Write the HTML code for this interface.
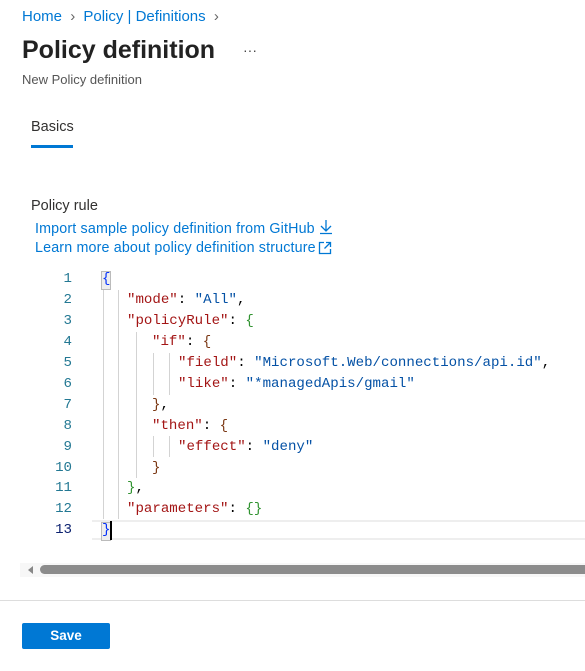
<!DOCTYPE html>
<html><head><style>
body{margin:0;width:585px;height:671px;background:#fff;font-family:"Liberation Sans",sans-serif;position:relative;overflow:hidden}
.a{position:absolute;white-space:nowrap}
.lk{color:#0078d4}
.code{font-family:"Liberation Mono",monospace;font-size:14.1px}
.n{position:absolute;left:40px;width:32px;text-align:right;color:#237893}
.k{color:#a31515}.s{color:#0451a5}
.b1{color:#0431fa}.b2{color:#319331}.b3{color:#7b3814}
.g{position:absolute;width:1px;background:#d3d3d3}
</style></head><body>
<div class="a lk" style="left:22px;top:8px;font-size:15px">Home <span style="color:#666;margin:0 4px">&#8250;</span> Policy | Definitions <span style="color:#666;margin-left:4px">&#8250;</span></div>
<div class="a" style="left:22px;top:36px;font-size:25px;font-weight:bold;color:#222">Policy definition</div>
<div class="a" style="left:243px;top:42px;font-size:14px;color:#444">···</div>
<div class="a" style="left:22px;top:72px;font-size:13px;color:#555">New Policy definition</div>
<div class="a" style="left:31px;top:119px;font-size:14.5px;color:#323130">Basics</div>
<div class="a" style="left:31px;top:145px;width:42px;height:3px;background:#0078d4"></div>
<div class="a" style="left:31px;top:198px;font-size:14.5px;color:#323130">Policy rule</div>
<div class="a lk" style="left:35px;top:221px;font-size:14.3px;letter-spacing:0.15px">Import sample policy definition from GitHub</div>
<svg class="a" style="left:319px;top:219px" width="14" height="16"><path d="M7 1v11M2 7l5 5 5-5M1 14.5h12" stroke="#0078d4" fill="none" stroke-width="1.3"/></svg>
<div class="a lk" style="left:35px;top:240px;font-size:14.3px;letter-spacing:0.15px">Learn more about policy definition structure</div>
<svg class="a" style="left:318px;top:241px" width="14" height="14"><path d="M6 1.5H1.5v11h11V8M8 1.5h4.5V6M12.5 1.5L6.5 7.5" stroke="#0078d4" fill="none" stroke-width="1.3"/></svg>

<div class="a" style="left:92px;top:520px;width:493px;height:20px;border-top:2px solid #eee;border-bottom:2px solid #eee;box-sizing:border-box"></div>
<div class="g" style="left:103px;top:290px;height:229px"></div>
<div class="g" style="left:118px;top:290px;height:229px"></div>
<div class="g" style="left:136px;top:332px;height:146px"></div>
<div class="g" style="left:153px;top:353px;height:42px"></div>
<div class="g" style="left:169px;top:353px;height:42px"></div>
<div class="g" style="left:153px;top:436px;height:21px"></div>
<div class="g" style="left:169px;top:436px;height:21px"></div>
<div class="a" style="left:101px;top:271px;width:8px;height:17px;background:#eee;border:1px solid #bbb"></div>
<div class="a" style="left:101px;top:522px;width:8px;height:17px;background:#eee;border:1px solid #bbb"></div>
<div class="a" style="left:110px;top:521px;width:2px;height:19px;background:#000"></div>
<div class="code">
<div class="n" style="top:271px">1</div><div class="n" style="top:292px">2</div><div class="n" style="top:313px">3</div><div class="n" style="top:334px">4</div><div class="n" style="top:355px">5</div><div class="n" style="top:376px">6</div><div class="n" style="top:397px">7</div><div class="n" style="top:418px">8</div><div class="n" style="top:439px">9</div><div class="n" style="top:460px">10</div><div class="n" style="top:480px">11</div><div class="n" style="top:501px">12</div><div class="n" style="top:522px;color:#0b216f">13</div>
<div class="a b1" style="left:102px;top:271px">{</div>
<div class="a" style="left:127px;top:292px"><span class="k">"mode"</span>: <span class="s">"All"</span>,</div>
<div class="a" style="left:127px;top:313px"><span class="k">"policyRule"</span>: <span class="b2">{</span></div>
<div class="a" style="left:152px;top:334px"><span class="k">"if"</span>: <span class="b3">{</span></div>
<div class="a" style="left:178px;top:355px"><span class="k">"field"</span>: <span class="s">"Microsoft.Web/connections/api.id"</span>,</div>
<div class="a" style="left:178px;top:376px"><span class="k">"like"</span>: <span class="s">"*managedApis/gmail"</span></div>
<div class="a" style="left:152px;top:397px"><span class="b3">}</span>,</div>
<div class="a" style="left:152px;top:418px"><span class="k">"then"</span>: <span class="b3">{</span></div>
<div class="a" style="left:178px;top:439px"><span class="k">"effect"</span>: <span class="s">"deny"</span></div>
<div class="a b3" style="left:152px;top:460px">}</div>
<div class="a" style="left:127px;top:480px"><span class="b2">}</span>,</div>
<div class="a" style="left:127px;top:501px"><span class="k">"parameters"</span>: <span class="b2">{}</span></div>
<div class="a b1" style="left:102px;top:522px">}</div>
</div>
<div class="a" style="left:20px;top:563px;width:565px;height:14px;background:#f7f7f7"></div>
<div class="a" style="left:28px;top:566px;width:0;height:0;border-top:4px solid transparent;border-bottom:4px solid transparent;border-right:5px solid #888"></div>
<div class="a" style="left:40px;top:565px;width:550px;height:9px;border-radius:5px;background:#8c8c8c"></div>
<div class="a" style="left:0;top:600px;width:585px;height:1px;background:#ddd"></div>
<div class="a" style="left:22px;top:623px;width:88px;height:26px;background:#0078d4;border-radius:2px;color:#fff;font-size:13.5px;font-weight:bold;text-align:center;line-height:26px">Save</div>
</body></html>
